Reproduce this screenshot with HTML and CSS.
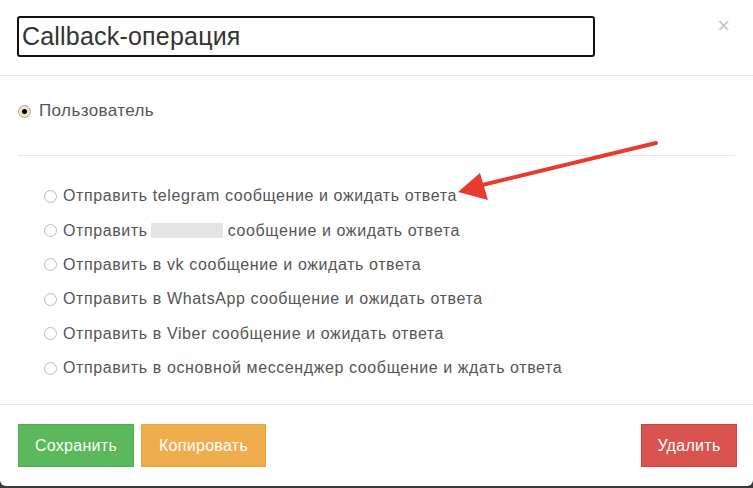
FILE: index.html
```html
<!DOCTYPE html>
<html lang="ru">
<head>
<meta charset="utf-8">
<link rel="stylesheet" href="styles.css">
</head>
<body>
<div class="modal">
  <div class="modal-header">
    <div class="title-input">Callback-операция</div>
    <span class="close">×</span>
  </div>
  <div class="modal-body">
    <label class="main-radio"><span class="radio-main checked"></span>Пользователь</label>
    <div class="divider"></div>
    <ul class="options">
      <li><span class="radio"></span>Отправить telegram сообщение и ожидать ответа</li>
      <li><span class="radio"></span>Отправить <span class="redacted"></span> сообщение и ожидать ответа</li>
      <li><span class="radio"></span>Отправить в vk сообщение и ожидать ответа</li>
      <li><span class="radio"></span>Отправить в WhatsApp сообщение и ожидать ответа</li>
      <li><span class="radio"></span>Отправить в Viber сообщение и ожидать ответа</li>
      <li><span class="radio"></span>Отправить в основной мессенджер сообщение и ждать ответа</li>
    </ul>
  </div>
  <div class="modal-footer">
    <button class="btn btn-green">Сохранить</button>
    <button class="btn btn-orange">Копировать</button>
    <button class="btn btn-red">Удалить</button>
  </div>
  <svg class="arrow" width="753" height="488" viewBox="0 0 753 488">
    <line x1="656" y1="143" x2="478" y2="186" stroke="#e63b2e" stroke-width="4" stroke-linecap="round"/>
    <polygon points="458,192 480,173 488,200" fill="#e63b2e"/>
  </svg>
</div>
</body>
</html>
```
FILE: styles.css
```css
html, body {
  margin: 0;
  padding: 0;
}
body {
  background: #3a3a3a;
  width: 753px;
  height: 488px;
  overflow: hidden;
  font-family: "Liberation Sans", Arial, sans-serif;
  color: #555;
}
.modal {
  position: relative;
  background: #fff;
  height: 486px;
  border-radius: 0 0 6px 6px;
  display: flex;
  flex-direction: column;
}
.modal-header {
  height: 76px;
  box-sizing: border-box;
  border-bottom: 1px solid #e5e5e5;
  padding: 16px 17px 0 17px;
  display: flex;
  align-items: flex-start;
}
.title-input {
  width: 578px;
  height: 41px;
  box-sizing: border-box;
  border: 2px solid #111;
  border-radius: 3px;
  padding: 0 0 0 3px;
  font-size: 25px;
  letter-spacing: 0.2px;
  line-height: 37px;
  color: #333;
}
.close {
  margin-left: auto;
  margin-right: 6px;
  margin-top: -1px;
  font-size: 22px;
  line-height: 22px;
  color: #c5c5c5;
}
.modal-body {
  flex: 1;
  padding: 0 18px;
  border-bottom: 1px solid #e5e5e5;
}
.main-radio {
  display: flex;
  align-items: center;
  margin-top: 25px;
  height: 20px;
  font-size: 17px;
  letter-spacing: 0.4px;
  color: #555;
}
.radio-main {
  width: 11px;
  height: 11px;
  border-radius: 50%;
  border: 1px solid #bba98a;
  background: #f3e3c3;
  margin-right: 8px;
  position: relative;
  display: inline-block;
}
.radio-main.checked::after {
  content: "";
  position: absolute;
  left: 3px;
  top: 3px;
  width: 5px;
  height: 5px;
  border-radius: 50%;
  background: #000;
}
.divider {
  height: 1px;
  background: #e8e8e8;
  margin-top: 34px;
}
.options {
  list-style: none;
  margin: 0;
  padding: 0 0 0 26px;
  margin-top: 23px;
}
.options li {
  display: flex;
  align-items: center;
  height: 34.4px;
  font-size: 16px;
  letter-spacing: 0.6px;
  color: #555;
  white-space: pre;
}
.radio {
  display: inline-block;
  width: 11px;
  height: 11px;
  border-radius: 50%;
  border: 1px solid #bbb;
  margin-right: 6px;
  box-sizing: content-box;
}
.redacted {
  display: inline-block;
  width: 72px;
  height: 15px;
  margin-left: -2px;
  background: #e4e4e4;
}
.modal-footer {
  height: 81px;
  box-sizing: border-box;
  padding: 19px 16px 0 18px;
  display: flex;
  gap: 7px;
}
.btn {
  height: 43px;
  border: 1px solid;
  border-radius: 0;
  color: #fff;
  font-family: inherit;
  font-size: 16px;
  padding: 0 10px;
  letter-spacing: 0.3px;
  cursor: pointer;
}
.btn-green {
  background: #5cb85c;
  border-color: #4cae4c;
  width: 116px;
}
.btn-orange {
  background: #f0ad4e;
  border-color: #eea236;
  width: 125px;
}
.btn-red {
  background: #d9534f;
  border-color: #d43f3a;
  width: 96px;
  margin-left: auto;
}
.arrow {
  position: absolute;
  left: 0;
  top: 0;
  pointer-events: none;
}
```
